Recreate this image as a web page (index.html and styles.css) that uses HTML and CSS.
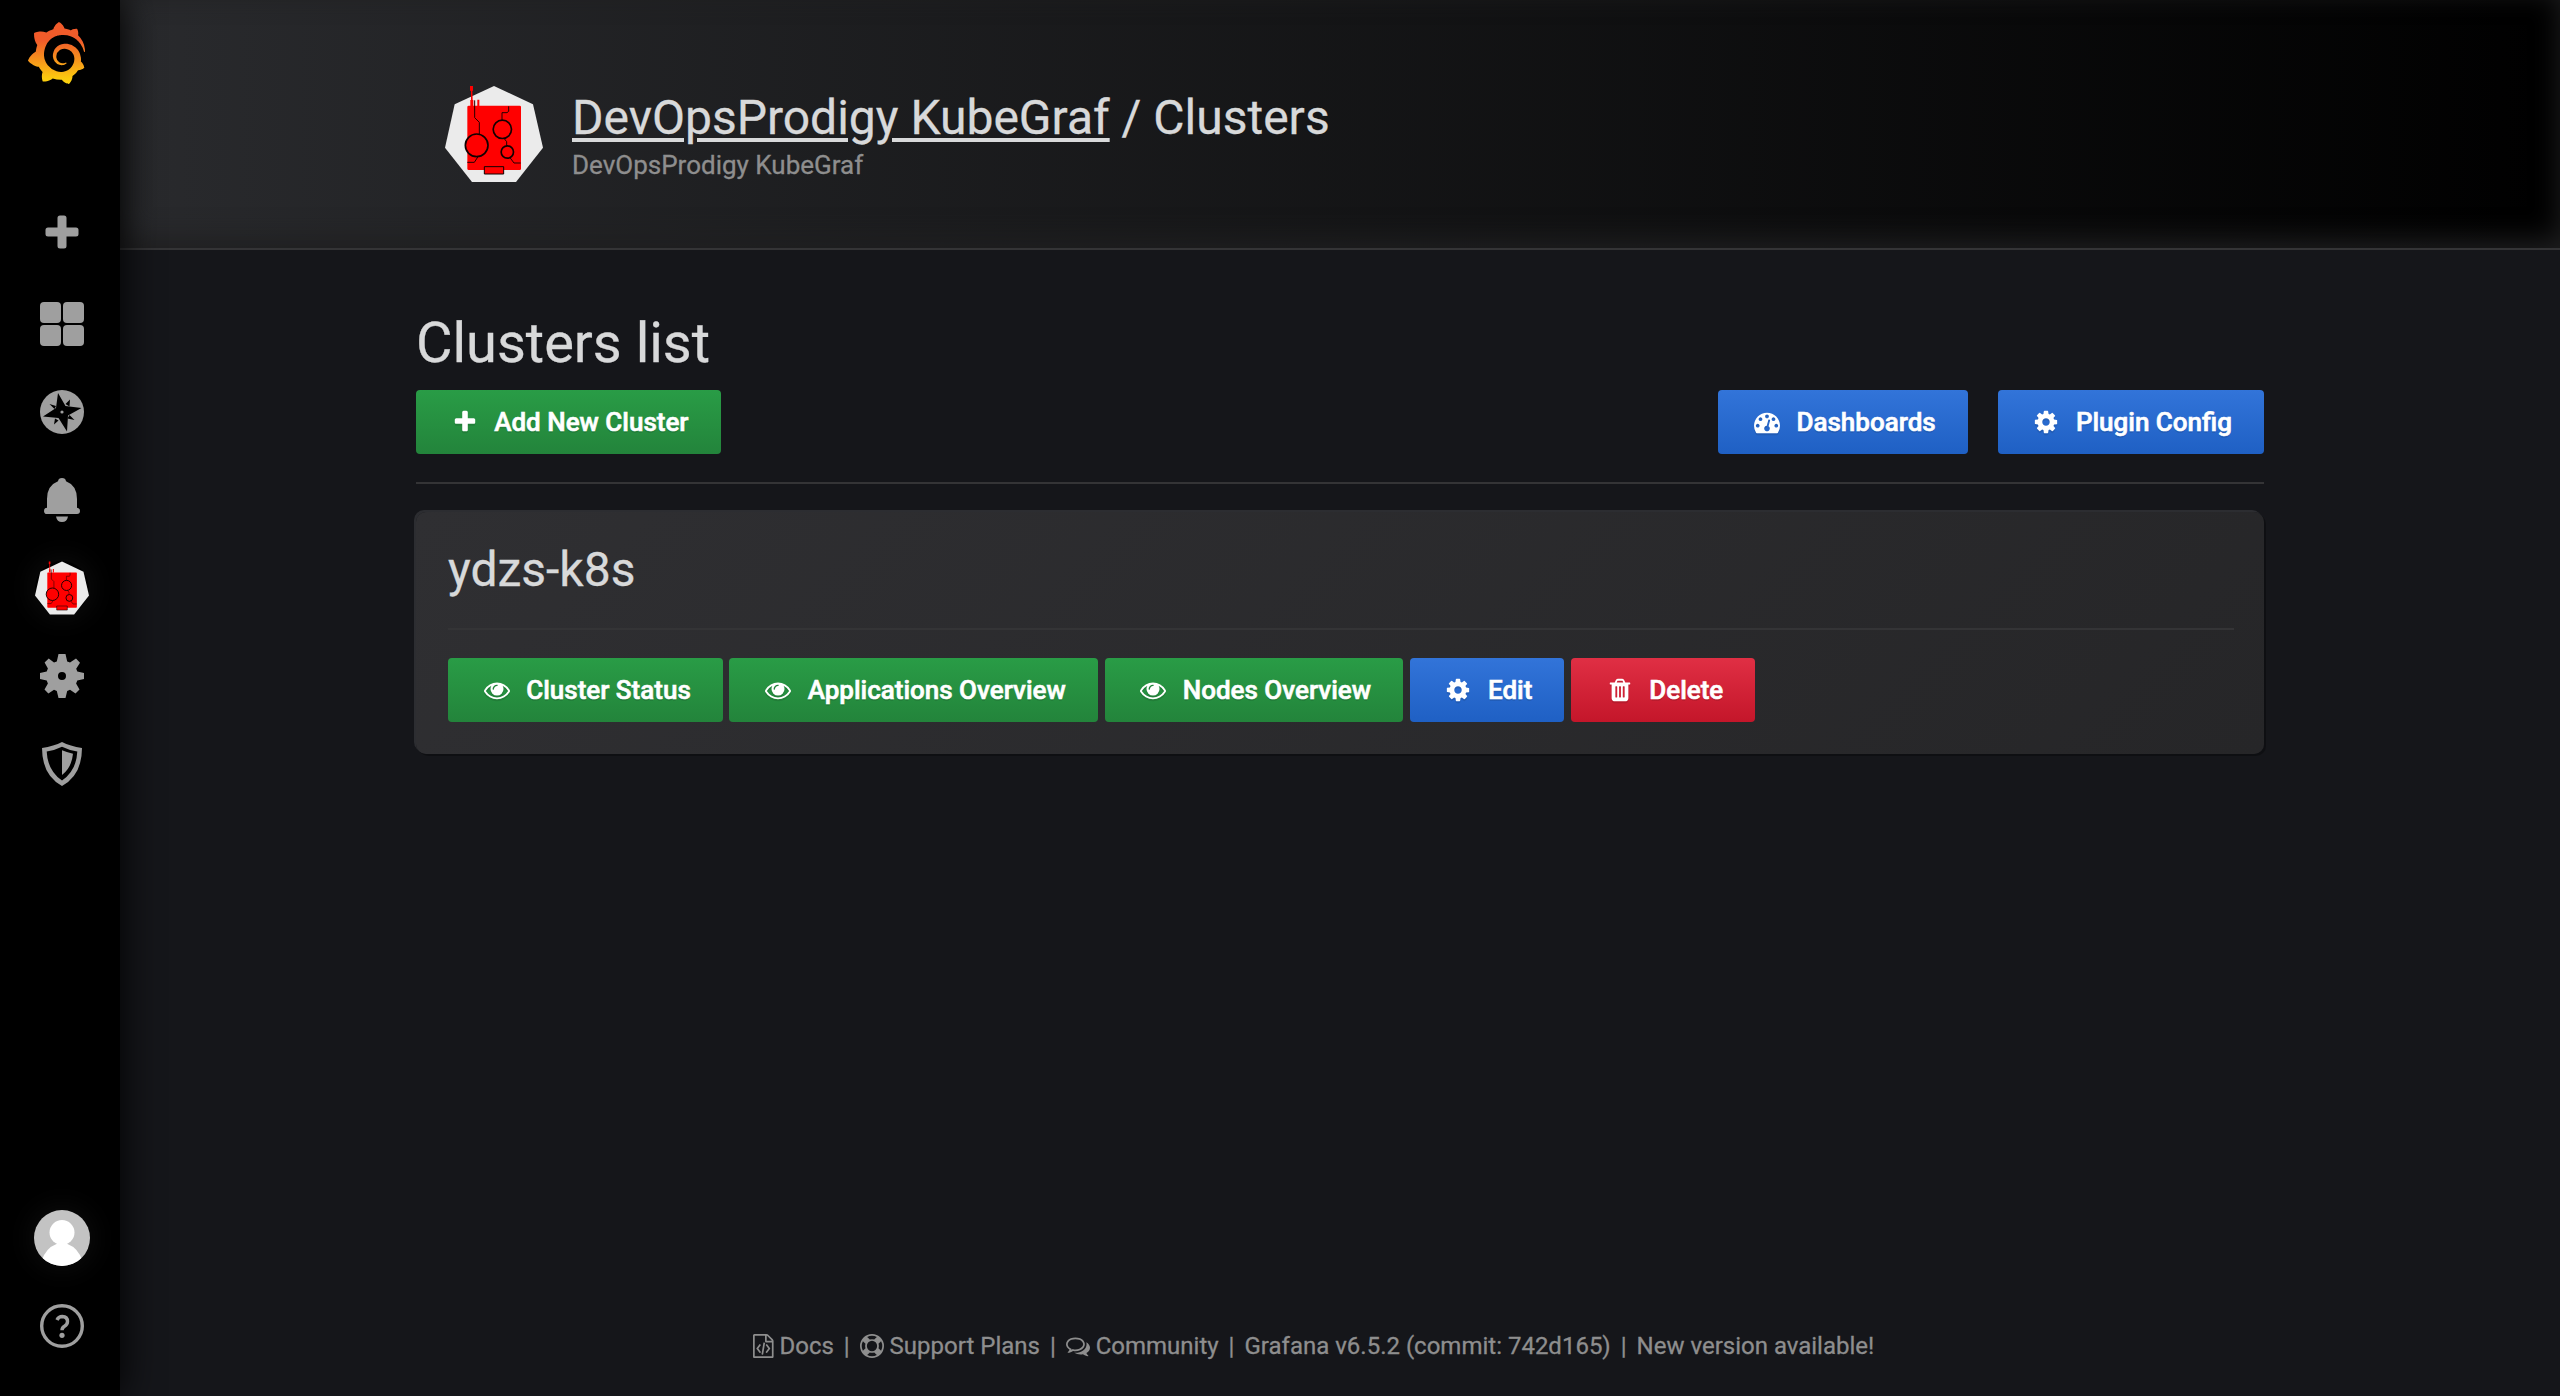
FILE: index.html
```
<!DOCTYPE html>
<html lang="en">
<head>
<meta charset="utf-8">
<title>Clusters - DevOpsProdigy KubeGraf</title>
<link rel="stylesheet" href="styles.css">
</head>
<body>
<svg class="defs" width="0" height="0" aria-hidden="true">
  <symbol id="eye" viewBox="0 0 1792 1792"><path d="M1664 960q-152-236-381-353 61 104 61 225 0 185-131.500 316.500t-316.500 131.500-316.500-131.500-131.500-316.500q0-121 61-225-229 117-381 353 133 205 333.500 326.500t434.500 121.500 434.500-121.500 333.500-326.500zm-720-384q0-20-14-34t-34-14q-125 0-214.500 89.500t-89.500 214.500q0 20 14 34t34 14 34-14 14-34q0-86 61-147t147-61q20 0 34-14t14-34zm848 384q0 34-20 69-140 230-376.500 368.500t-499.500 138.500-499.500-139-376.500-368q-20-35-20-69t20-69q140-229 376.500-368t499.500-139 499.500 139 376.500 368q20 35 20 69z"/></symbol>
  <symbol id="plus" viewBox="0 0 1792 1792"><path d="M1600 736v192q0 40-28 68t-68 28h-416v416q0 40-28 68t-68 28h-192q-40 0-68-28t-28-68v-416h-416q-40 0-68-28t-28-68v-192q0-40 28-68t68-28h416v-416q0-40 28-68t68-28h192q40 0 68 28t28 68v416h416q40 0 68 28t28 68z"/></symbol>
  <symbol id="cog" viewBox="0 0 1792 1792"><path d="M1152 896q0-106-75-181t-181-75-181 75-75 181 75 181 181 75 181-75 75-181zm512-109v222q0 12-8 23t-20 13l-185 28q-19 54-39 91 35 50 107 138 10 12 10 25t-9 23q-27 37-99 108t-94 71q-12 0-26-9l-138-108q-44 23-91 38-16 136-29 186-7 28-36 28h-222q-14 0-24.500-8.500t-11.500-21.500l-28-184q-49-16-90-37l-141 107q-10 9-25 9-14 0-25-11-126-114-165-168-7-10-7-23 0-12 8-23 15-21 51-66.500t54-70.500q-27-50-41-99l-183-27q-13-2-21-12.500t-8-23.500v-222q0-12 8-23t19-13l186-28q14-46 39-92-40-57-107-138-10-12-10-24 0-10 9-23 26-36 98.500-107.500t94.500-71.500q13 0 26 10l138 107q44-23 91-38 16-136 29-186 7-28 36-28h222q14 0 24.500 8.500t11.500 21.500l28 184q49 16 90 37l142-107q9-9 24-9 13 0 25 10 129 119 165 170 7 8 7 22 0 12-8 23-15 21-51 66.500t-54 70.500q26 50 41 98l183 28q13 2 21 12.500t8 23.500z"/></symbol>
  <symbol id="trash" viewBox="0 0 1792 1792"><path d="M704 1376v-704q0-14-9-23t-23-9h-64q-14 0-23 9t-9 23v704q0 14 9 23t23 9h64q14 0 23-9t9-23zm256 0v-704q0-14-9-23t-23-9h-64q-14 0-23 9t-9 23v704q0 14 9 23t23 9h64q14 0 23-9t9-23zm256 0v-704q0-14-9-23t-23-9h-64q-14 0-23 9t-9 23v704q0 14 9 23t23 9h64q14 0 23-9t9-23zm-544-992h448l-48-117q-7-9-17-11h-317q-10 2-17 11zm928 32v64q0 14-9 23t-23 9h-96v948q0 83-47 143.500t-113 60.500h-832q-66 0-113-58.500t-47-141.500v-952h-96q-14 0-23-9t-9-23v-64q0-14 9-23t23-9h309l70-167q15-37 54-63t79-26h320q40 0 79 26t54 63l70 167h309q14 0 23 9t9 23z"/></symbol>
  <symbol id="gauge" viewBox="0 0 1792 1792"><path d="M384 1152q0-53-37.500-90.500t-90.500-37.500-90.500 37.500-37.500 90.500 37.500 90.500 90.500 37.500 90.500-37.500 37.500-90.500zm192-448q0-53-37.500-90.500t-90.500-37.500-90.500 37.500-37.500 90.500 37.500 90.500 90.500 37.500 90.500-37.500 37.500-90.500zm428 481l101-382q6-26-7.500-48.500t-38.500-29.500-48 6.500-30 39.500l-101 382q-60 5-107 43.500t-63 98.500q-20 77 20 146t117 89 146-20 89-117q16-60-6-117t-72-91zm660-33q0-53-37.500-90.500t-90.500-37.500-90.500 37.500-37.500 90.500 37.500 90.500 90.500 37.500 90.500-37.500 37.500-90.500zm-640-640q0-53-37.500-90.500t-90.500-37.500-90.500 37.500-37.500 90.500 37.500 90.500 90.500 37.500 90.500-37.500 37.500-90.500zm448 192q0-53-37.500-90.500t-90.500-37.500-90.500 37.500-37.500 90.500 37.500 90.500 90.500 37.500 90.500-37.500 37.500-90.500zm320 448q0 261-141 483-19 29-54 29h-1402q-35 0-54-29-141-221-141-483 0-182 71-348t191-286 286-191 348-71 348 71 286 191 191 286 71 348z"/></symbol>
  <symbol id="kubegraf" viewBox="135 77 294 288">
    <path fill="#ebebeb" d="M282 77 399 132 429 262 348 365H216L135 262 164 132z"/>
    <path fill="#f00" d="M206 136h153q4 0 4 4v185q0 4-4 4H206q-4 0-4-4V140q0-4 4-4z"/>
    <path fill="#f00" d="M210 77h9v14h-2l1 28h2v18h-9v-18h2V91h-3zM232 118h6v19h-6z"/>
    <g fill="none" stroke="#200" stroke-width="3">
      <path d="M224 120v52l14 14v36M326 138v15l-5 4h-15v23M312 234l8 10v13M330 292l12 16h20M234 289l-11 17h-21"/>
    </g>
    <g fill="#f00" stroke="#100" stroke-width="5">
      <circle cx="230" cy="255" r="34"/><circle cx="307" cy="207" r="27.500"/><circle cx="322" cy="275" r="18.500"/>
      <path stroke-width="3" d="M253 319h58v22h-58z"/>
    </g>
  </symbol>
</svg>

<nav class="sidemenu">
  <a class="brand" aria-label="Home">
    <svg width="57" height="62" viewBox="0.953 0 22.100 24" preserveAspectRatio="none">
      <defs><linearGradient id="flame" x1="0" y1="1" x2="0" y2="0"><stop offset="0" stop-color="#fcd50f"/><stop offset="0.100" stop-color="#fbc80f"/><stop offset="0.700" stop-color="#f15b2a"/><stop offset="1" stop-color="#f15b2a"/></linearGradient></defs>
      <path fill="url(#flame)" d="M23.020 10.590a8.578 8.578 0 0 0-.862-3.034 8.911 8.911 0 0 0-1.789-2.445c.337-1.342-.413-2.505-.413-2.505-1.292-.08-2.113.4-2.416.62-.052-.02-.102-.044-.154-.064-.22-.089-.446-.172-.677-.247-.231-.073-.47-.14-.711-.197a9.867 9.867 0 0 0-.875-.161C14.557.753 12.940 0 12.940 0c-1.804 1.145-2.147 2.744-2.147 2.744l-.018.093c-.098.029-.2.057-.298.088-.138.042-.275.094-.413.143-.138.055-.275.107-.41.166a8.869 8.869 0 0 0-1.557.87l-.063-.029c-2.497-.955-4.716.195-4.716.195-.203 2.658.996 4.330 1.235 4.636a11.608 11.608 0 0 0-.607 2.635C1.636 12.677.953 15.014.953 15.014c1.926 2.214 4.171 2.351 4.171 2.351.003-.002.006-.002.006-.005.285.509.615.994.986 1.446.156.19.32.371.488.548-.704 2.009.099 3.680.099 3.680 2.144.08 3.553-.937 3.849-1.173a9.784 9.784 0 0 0 3.164.501h.08l.055-.003.107-.002.103-.005.003.002c1.010 1.440 2.788 1.646 2.788 1.646 1.264-1.332 1.337-2.653 1.337-2.940v-.058c0-.02-.003-.039-.003-.06.265-.187.52-.387.758-.6a7.875 7.875 0 0 0 1.415-1.700c1.430.083 2.437-.885 2.437-.885-.236-1.490-1.085-2.216-1.264-2.354l-.018-.013-.016-.013a.217.217 0 0 1-.031-.02c.008-.092.016-.18.02-.27.011-.162.016-.323.016-.48v-.253l-.005-.098-.008-.135a1.891 1.891 0 0 0-.01-.13c-.003-.042-.008-.083-.013-.125l-.016-.124-.018-.122a6.215 6.215 0 0 0-2.032-3.730 6.015 6.015 0 0 0-3.222-1.460 6.292 6.292 0 0 0-.85-.048l-.107.002h-.063l-.044.003-.104.008a4.777 4.777 0 0 0-3.335 1.695c-.332.4-.592.84-.768 1.297a4.594 4.594 0 0 0-.312 1.817l.003.091c.005.055.007.11.013.164a3.615 3.615 0 0 0 .698 1.820 3.530 3.530 0 0 0 1.827 1.282c.33.098.66.14.971.137.039 0 .078 0 .114-.002l.063-.003c.02 0 .041-.003.062-.003.034-.002.065-.007.099-.01.007 0 .018-.003.028-.003l.031-.005.06-.008a1.180 1.180 0 0 0 .112-.02c.036-.008.072-.013.109-.024a2.634 2.634 0 0 0 .914-.415c.028-.02.056-.041.085-.065a.248.248 0 0 0 .039-.35.244.244 0 0 0-.309-.06l-.078.042c-.09.044-.184.083-.283.116a2.476 2.476 0 0 1-.475.096c-.028.003-.054.006-.083.006l-.083.002c-.026 0-.054 0-.08-.002l-.102-.006h-.012l-.024.006c-.016-.003-.031-.003-.044-.006-.031-.002-.06-.007-.091-.01a2.590 2.590 0 0 1-.724-.213 2.557 2.557 0 0 1-.667-.438 2.520 2.520 0 0 1-.805-1.475 2.306 2.306 0 0 1-.029-.444l.006-.122v-.023l.002-.031c.003-.021.003-.04.005-.06a3.163 3.163 0 0 1 1.352-2.290 3.120 3.120 0 0 1 .937-.43 2.946 2.946 0 0 1 .776-.101h.06l.07.002.045.003h.026l.07.005a4.041 4.041 0 0 1 1.635.49 3.940 3.940 0 0 1 1.602 1.662 3.770 3.770 0 0 1 .397 1.414l.005.076.003.075c.002.026.002.05.002.075 0 .024.003.052 0 .07v.065l-.002.073-.008.174a6.195 6.195 0 0 1-.08.639 5.100 5.100 0 0 1-.267.927 5.310 5.310 0 0 1-.624 1.130 5.052 5.052 0 0 1-3.237 2.014 4.820 4.820 0 0 1-.649.066l-.039.003h-.287a6.607 6.607 0 0 1-1.716-.265 6.776 6.776 0 0 1-3.400-2.274 6.750 6.750 0 0 1-.746-1.150 6.616 6.616 0 0 1-.714-2.596l-.005-.083-.002-.02v-.056l-.003-.073v-.096l-.003-.104v-.07l.003-.163c.008-.22.026-.45.054-.678a8.707 8.707 0 0 1 .28-1.355c.128-.444.286-.872.473-1.277a7.040 7.040 0 0 1 1.456-2.100 5.925 5.925 0 0 1 .953-.763c.169-.111.343-.213.524-.306.089-.05.182-.091.273-.135.047-.02.093-.042.138-.062a7.177 7.177 0 0 1 .714-.267l.145-.045c.049-.015.098-.026.148-.041.098-.029.197-.052.296-.076.049-.013.1-.02.15-.033l.15-.032.151-.028.076-.013.075-.01.153-.024c.057-.01.114-.013.171-.023l.169-.021c.036-.003.073-.008.106-.01l.073-.008.036-.003.042-.002c.057-.003.114-.008.171-.01l.086-.006h.023l.037-.003.145-.007a7.999 7.999 0 0 1 1.708.125 7.917 7.917 0 0 1 2.048.68 8.253 8.253 0 0 1 1.672 1.090l.09.077.089.078c.06.052.114.107.171.159.057.052.112.106.166.16.052.055.107.107.159.164a8.671 8.671 0 0 1 1.410 1.978c.012.026.028.052.04.078l.04.078.075.156c.023.051.05.1.07.153l.065.15a8.848 8.848 0 0 1 .45 1.340.19.19 0 0 0 .201.142.186.186 0 0 0 .172-.184c.01-.246.002-.532-.024-.856z"/>
    </svg>
  </a>
  <div class="menu">
    <a class="item create" aria-label="Create"><svg width="34" height="34" viewBox="0 0 34 34"><path d="M15 .5h4q2.500 0 2.500 2.500v9.500H31q2.500 0 2.500 2.500v4q0 2.500-2.500 2.500h-9.500V31q0 2.500-2.500 2.500h-4q-2.500 0-2.500-2.500v-9.500H3Q.5 21.500.5 19v-4q0-2.500 2.500-2.500h9.500V3Q12.500.5 15 .5z"/></svg></a>
    <a class="item" aria-label="Dashboards"><svg width="44" height="44" viewBox="0 0 44 44"><rect width="21" height="21" rx="4"/><rect x="23" width="21" height="21" rx="4"/><rect y="23" width="21" height="21" rx="4"/><rect x="23" y="23" width="21" height="21" rx="4"/></svg></a>
    <a class="item" aria-label="Explore"><svg width="44" height="44" viewBox="0 0 44 44"><circle cx="22" cy="22" r="22"/><path fill="#000" d="M18 3 25.500 16 41.500 18 28 25.500 27 41.500 18.500 28 3 26.500 16 18z"/><path fill="#000" d="M30 9.500 29.500 16.500 25.500 14zM34.500 30 27.500 28.500 29.500 25zM14 34.500 15 28.500 18.500 30.500zM9.500 14 16 16 14.500 19z"/><circle cx="22" cy="22" r="1.600"/></svg></a>
    <a class="item" aria-label="Alerting"><svg width="36" height="44" viewBox="0 0 36 44"><path d="M18 0q3.500 0 4 3.300Q33 7.500 33 21v8.700q3 .3 3 3.200T33 36H3q-3 0-3-3.100t3-3.200V21Q3 7.500 14 3.300 14.500 0 18 0zM12 38.500h12Q23 44 18 44t-6-5.500z"/></svg></a>
    <a class="item" aria-label="DevOpsProdigy KubeGraf"><span class="halo"><svg width="54" height="54"><use href="#kubegraf"/></svg></span></a>
    <a class="item" aria-label="Configuration"><svg width="44" height="44" viewBox="0 0 44 44"><path fill-rule="evenodd" d="M18.500 0h7l1.700 7.400 2.800 1.200L36 4.600l4 4.100-3.800 6 1.100 2.800 6.700 1.500v6l-6.700 1.500-1.200 2.900 3.400 6-4 4-5.500-3.600-2.800 1.200L25.500 44h-7l-1.700-7.100-2.800-1.200-5.600 3.700-3.900-4 3.400-6-1.200-2.900L0 25v-6l6.700-1.500 1.200-2.900-3.300-6 4.100-4 5.300 4 2.800-1.200zM22 18a4 4 0 1 0 0 8 4 4 0 0 0 0-8z"/></svg></a>
    <a class="item" aria-label="Server Admin"><svg width="40" height="44" viewBox="0 0 40 44"><path fill-rule="evenodd" d="M20 0q8 4.200 20 6 0 27-20 38Q0 33 0 6 12 4.200 20 0zm0 4.800Q13 8.300 4.700 9.600 5.500 28.500 20 38.600 34.500 28.500 35.300 9.600 27 8.300 20 4.800z"/><path d="M20 8.300q5.500 2.300 11 3.400Q29.500 26 20 33z"/></svg></a>
  </div>
  <div class="menu bottom">
    <a class="item" aria-label="Profile"><span class="halo"><svg width="56" height="56" viewBox="0 0 56 56"><clipPath id="round"><circle cx="28" cy="28" r="28"/></clipPath><g clip-path="url(#round)"><path fill="#c3c3c3" d="M0 0h56v56H0z"/><circle cx="28" cy="22.500" r="12.500" fill="#fff"/><path fill="#fff" d="M8 50q4-12 14.500-16h11Q44 38 48 50v8H8z"/></g></svg></span></a>
    <a class="item" aria-label="Help"><svg width="44" height="44" viewBox="0 0 44 44"><g fill="none" stroke="#9f9f9f"><circle cx="22" cy="22" r="20.300" stroke-width="3.400"/><path stroke-width="3.400" d="M17 16q1.500-3.500 5.300-3.500 5.200.2 5.200 5 0 3-3 4.800-2.500 1.500-2.500 4"/></g><circle cx="22" cy="31.300" r="2.600"/></svg></a>
  </div>
</nav>

<main class="main">
  <header class="page-header">
    <div class="container header-inner">
      <svg class="header-logo" width="98" height="96"><use href="#kubegraf"/></svg>
      <div>
        <h1 class="title"><a class="title-link">DevOpsProdigy KubeGraf</a> / Clusters</h1>
        <div class="subtitle">DevOpsProdigy KubeGraf</div>
      </div>
    </div>
  </header>

  <section class="container content">
    <h1 class="heading">Clusters list</h1>
    <div class="toolbar">
      <a class="btn green"><svg class="fa"><use href="#plus"/></svg>Add New Cluster</a>
      <div class="toolbar-right">
        <a class="btn blue"><svg class="fa"><use href="#gauge"/></svg>Dashboards</a>
        <a class="btn blue"><svg class="fa"><use href="#cog"/></svg>Plugin Config</a>
      </div>
    </div>
    <article class="card">
      <h2 class="card-title">ydzs-k8s</h2>
      <div class="actions">
        <a class="btn green"><svg class="fa"><use href="#eye"/></svg>Cluster Status</a>
        <a class="btn green"><svg class="fa"><use href="#eye"/></svg>Applications Overview</a>
        <a class="btn green"><svg class="fa"><use href="#eye"/></svg>Nodes Overview</a>
        <a class="btn blue"><svg class="fa"><use href="#cog"/></svg>Edit</a>
        <a class="btn red"><svg class="fa"><use href="#trash"/></svg>Delete</a>
      </div>
    </article>
  </section>

  <footer class="footer">
    <a class="foot-item"><svg width="20.600" height="24" viewBox="128 0 1536 1792"><path d="M1596 380q28 28 48 76t20 88v1152q0 40-28 68t-68 28h-1344q-40 0-68-28t-28-68v-1600q0-40 28-68t68-28h896q40 0 88 20t76 48zm-444-244v376h376q-10-29-22-41l-313-313q-12-12-41-22zm384 1528v-1024h-416q-40 0-68-28t-28-68v-416h-768v1536h1280zm-928-896q8-11 21-12.500t24 6.500l51 38q11 8 12.500 21t-6.500 24l-182 243 182 243q8 11 6.500 24t-12.500 21l-51 38q-11 8-24 6.500t-21-12.500l-226-301q-14-19 0-38zm802 301q14 19 0 38l-226 301q-8 11-21 12.500t-24-6.500l-51-38q-11-8-12.500-21t6.500-24l182-243-182-243q-8-11-6.500-24t12.500-21l51-38q11-8 24-6.500t21 12.500zm-620 461q-13-2-20.500-13t-5.500-24l138-831q2-13 13-20.500t24-5.500l63 10q13 2 20.500 13t5.500 24l-138 831q-2 13-13 20.500t-24 5.500z"/></svg>Docs</a>
    <a class="foot-item"><svg width="24" height="24" viewBox="0 0 1792 1792"><path d="M896 0q182 0 348 71t286 191 191 286 71 348-71 348-191 286-286 191-348 71-348-71-286-191-191-286-71-348 71-348 191-286 286-191 348-71zm0 128q-190 0-361 90l194 194q82-28 167-28t167 28l194-194q-171-90-361-90zm-678 1129l194-194q-28-82-28-167t28-167l-194-194q-90 171-90 361t90 361zm678 407q190 0 361-90l-194-194q-82 28-167 28t-167-28l-194 194q171 90 361 90zm0-384q159 0 271.500-112.500t112.500-271.500-112.500-271.500-271.500-112.500-271.500 112.500-112.500 271.500 112.500 271.500 271.500 112.500zm484-217l194 194q90-171 90-361t-90-361l-194 194q28 82 28 167t-28 167z"/></svg>Support Plans</a>
    <a class="foot-item"><svg width="24" height="24" viewBox="0 0 1792 1792"><path d="M704 384q-153 0-286 52t-211.500 141-78.500 191q0 82 53 158t149 132l97 56-35 84q34-20 62-39l44-31 53 10q78 14 153 14 153 0 286-52t211.500-141 78.500-191-78.500-191-211.500-141-286-52zm0-128q191 0 353.500 68.500t256.500 186.500 94 257-94 257-256.500 186.500-353.500 68.500q-86 0-176-16-124 88-278 128-36 9-86 16h-3q-11 0-20.500-8t-11.500-21q-1-3-1-6.500t.5-6.500 2-6l2.500-5 3.500-5.500 4-5 4.500-5 4-4.500q5-6 23-25t26-29.500 22.500-29 25-38.500 20.500-44q-124-72-195-177t-71-224q0-139 94-257t256.500-186.500 353.500-68.500zm822 1169q10 24 20.500 44t25 38.500 22.500 29 26 29.500 23 25q1 1 4 4.500t4.500 5 4 5 3.500 5.500l2.500 5 2 6 .5 6.500-1 6.500q-3 14-13 22t-22 7q-50-7-86-16-154-40-278-128-90 16-176 16-271 0-472-132 58 4 88 4 161 0 309-45t264-129q125-92 192-212t67-254q0-77-23-152 129 71 204 178t75 230q0 120-71 224.500t-195 176.500z"/></svg>Community</a>
    <a class="foot-item">Grafana v6.5.2 (commit: 742d165)</a>
    <a class="foot-item">New version available!</a>
  </footer>
</main>
</body>
</html>
```
FILE: styles.css
```
* { box-sizing: border-box; }

html, body { height: 100%; }

body {
  margin: 0;
  display: flex;
  background: #15161a;
  color: #d8d9da;
  font-family: Roboto, "Liberation Sans", sans-serif;
  font-size: 26px;
  -webkit-text-stroke: 0.300px currentColor;
  overflow: hidden;
}

h1, h2 { margin: 0; font-weight: 400; }
svg { display: block; flex: none; }
.defs { position: absolute; }

/* side menu */
.sidemenu {
  position: relative;
  z-index: 1;
  flex: none;
  width: 120px;
  height: 100%;
  display: flex;
  flex-direction: column;
  background: #000;
  box-shadow: 0 0 40px #000;
}
.brand { padding: 22px 0 0 28px; height: 192px; }
.menu { padding-left: 4px; }
.menu.bottom { margin-top: auto; padding-bottom: 26px; }
.item {
  height: 88px;
  display: flex;
  align-items: center;
  justify-content: center;
  fill: #9f9f9f;
}
.create { padding-bottom: 9px; }
.halo {
  border-radius: 50%;
  box-shadow: 0 0 28px 4px rgba(255, 255, 255, 0.05);
}

/* page */
.main {
  flex: 1;
  height: 100%;
  display: flex;
  flex-direction: column;
}
.container { width: 1960px; margin: 0 auto; padding: 0 56px; }

.page-header {
  height: 250px;
  background: linear-gradient(90deg, #292a2d, #000);
  box-shadow: inset 0 -8px 28px #1f1f20;
  border-bottom: 2px solid #343436;
}
.header-inner { display: flex; padding-top: 86px; padding-left: 85px; }
.header-logo { margin-right: 29px; }
.title { font-size: 48px; line-height: 56px; margin-top: 4px; }
.title-link {
  text-decoration: underline;
  text-decoration-thickness: 4px;
  text-underline-offset: 4px;
}
.subtitle { font-size: 26px; line-height: 30px; margin-top: 4px; color: #8e8e8e; }

.heading { font-size: 56px; line-height: 66px; padding-top: 60px; }
.toolbar {
  display: flex;
  justify-content: space-between;
  margin-top: 14px;
  padding-bottom: 28px;
  border-bottom: 2px solid #343436;
}
.toolbar-right { display: flex; gap: 30px; }

.btn {
  display: flex;
  align-items: center;
  height: 64px;
  padding: 1px 32px 0;
  border-radius: 4px;
  color: #fff;
  fill: #fff;
  font-weight: 500;
  line-height: 63px;
  white-space: nowrap;
  -webkit-text-stroke-width: 0.600px;
  text-shadow: 0 2px 0 rgba(0, 0, 0, 0.1);
}
.green { background: linear-gradient(#299c46, #23843b); }
.blue { background: linear-gradient(#3274d9, #1f60c4); }
.red { background: linear-gradient(#e02f44, #c4162a); }
.fa {
  width: 26px;
  height: 26px;
  margin: -1px 16.500px 0 3.700px;
  filter: drop-shadow(0 2px 0 rgba(0, 0, 0, 0.1));
}

.card {
  margin-top: 28px;
  height: 242px;
  padding: 0 30px 0 32px;
  border-radius: 10px;
  background: linear-gradient(135deg, #2f2f32, #262628);
  box-shadow: -2px -2px 0 0 rgba(255, 255, 255, 0.1), 2px 2px 0 0 rgba(0, 0, 0, 0.3);
}
.card-title {
  height: 118px;
  padding-top: 29px;
  font-size: 48px;
  line-height: 58px;
  border-bottom: 2px solid #343436;
}
.actions { display: flex; gap: 6.700px; margin-top: 28px; }

.footer {
  margin-top: auto;
  height: 100px;
  padding-right: 52.800px;
  display: flex;
  justify-content: center;
  font-size: 24px;
  line-height: 100px;
  color: #8e8e8e;
  fill: #8e8e8e;
}
.foot-item { display: flex; align-items: center; white-space: pre; }
.foot-item svg { margin-right: 5.900px; }
.foot-item + .foot-item::before { content: "|"; margin: 0 10px; }
```
